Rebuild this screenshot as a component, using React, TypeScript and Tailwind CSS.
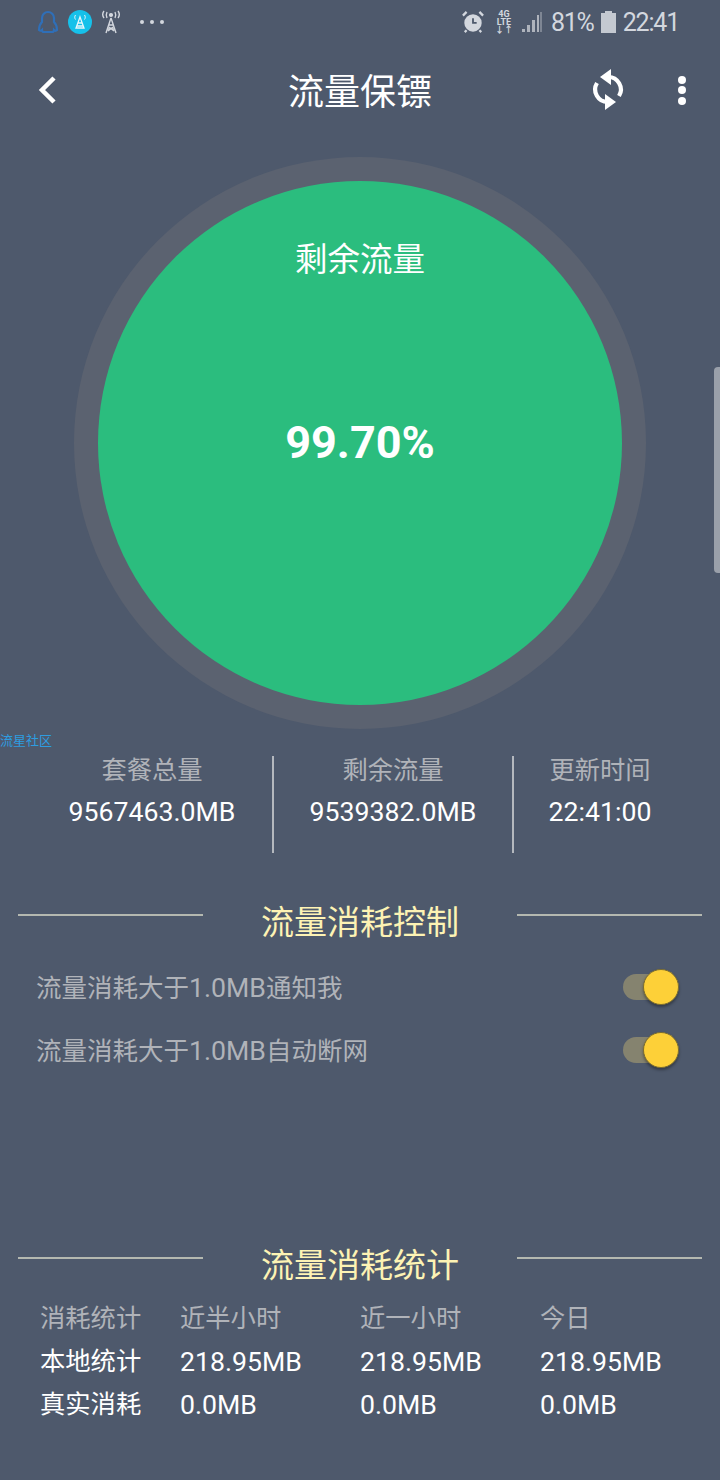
import React from 'react';

const cjk = 'font-["Roboto","Noto_Sans_CJK_SC",sans-serif]';

const SectionTitle = ({ title }: { title: string }) => (
  <div className="flex items-start px-[18px]">
    <div className="mt-[13px] h-[2px] w-[185px] bg-[#b4b8b0]" />
    <div className="flex-1 text-center text-[33px] leading-[44px] text-[#fdf3b4]">{title}</div>
    <div className="mt-[13px] h-[2px] w-[185px] bg-[#b4b8b0]" />
  </div>
);

const Toggle = () => (
  <div className="relative -mt-[2px] h-[26px] w-[56px] rounded-full bg-[#85836f]">
    <div className="absolute right-0 top-[-5px] h-[36px] w-[36px] rounded-full border border-[#7a6c30] bg-[#fdd038] shadow-[0_2px_3px_rgba(0,0,0,0.35)]" />
  </div>
);

const StatColumn = ({ label, value, width }: { label: string; value: string; width: string }) => (
  <div className={`flex flex-col items-center ${width}`}>
    <div className="text-[25.3px] leading-[30px] text-[#b0b3b9]">{label}</div>
    <div className="mt-[11px] text-[26.67px] leading-[30px] text-white">{value}</div>
  </div>
);

const rows = [
  { cells: ['消耗统计', '近半小时', '近一小时', '今日'], color: 'text-[#b0b3b9]', size: 'text-[25.3px]' },
  { cells: ['本地统计', '218.95MB', '218.95MB', '218.95MB'], color: 'text-white', size: 'text-[26.67px]' },
  { cells: ['真实消耗', '0.0MB', '0.0MB', '0.0MB'], color: 'text-white', size: 'text-[26.67px]' },
];

const StatusBar = () => (
  <div className="flex h-[44px] items-center justify-between pl-[37px] pr-[41px] text-[#d3d7de]">
    <div className="flex items-center">
      {/* QQ */}
      <svg width="22" height="24" viewBox="0 0 22 24" fill="none" stroke="#2f6fb8" strokeWidth="2.200">
        <path d="M5 12V8a6 6 0 0 1 12 0v4c2 2 3 5 3 8-1 1-2 1-3 0 0 1-1 2-2 2H7c-1 0-2-1-2-2-1 1-2 1-3 0 0-3 1-6 3-8z" />
      </svg>
      <svg className="ml-[9px]" width="24" height="24" viewBox="0 0 24 24">
        <circle cx="12" cy="12" r="12" fill="#16c1ea" />
        <path d="M12 7l-4 11h8zM10 13h4M9 16h6" fill="none" stroke="#e8f6fb" strokeWidth="1.300" />
        <path d="M7.500 5c-1 1.500-1 3 0 4.500M16.500 5c1 1.500 1 3 0 4.500" fill="none" stroke="#e8f6fb" strokeWidth="1" />
      </svg>
      <svg className="ml-[8px]" width="22" height="24" viewBox="0 0 22 24" fill="none" stroke="#d3d7de" strokeWidth="1.400">
        <path d="M11 8l-5 15M11 8l5 15M8.500 15h5M7 19h8M9 17l5 4M13 17l-5 4" />
        <circle cx="11" cy="5" r="1.400" fill="#d3d7de" />
        <path d="M7 2c-1 2-1 4 0 6M15 2c1 2 1 4 0 6M4 1c-1.500 2-1.500 5 0 7M18 1c1.500 2 1.500 5 0 7" />
      </svg>
      <div className="ml-[18px] flex gap-[6px]">
        <div className="h-[4px] w-[4px] rounded-full bg-[#d3d7de]" />
        <div className="h-[4px] w-[4px] rounded-full bg-[#d3d7de]" />
        <div className="h-[4px] w-[4px] rounded-full bg-[#d3d7de]" />
      </div>
    </div>
    <div className="flex items-center">
      <svg width="22" height="24" viewBox="0 0 24 26">
        <circle cx="12" cy="14" r="9.500" fill="#d3d7de" />
        <path d="M12 9v5h4" fill="none" stroke="#4e596c" strokeWidth="2" />
        <path d="M1 6l4-4M23 6l-4-4M5 22l-2 2M19 22l2 2" stroke="#d3d7de" strokeWidth="2.500" />
      </svg>
      <div className="ml-[13px] flex w-[14px] flex-col items-center text-[9px] font-bold leading-[8px]">
        <span>4G</span>
        <span>LTE</span>
        <span>↓↑</span>
      </div>
      <svg className="ml-[10px]" width="21" height="22" viewBox="0 0 21 22" fill="#aeb3bc">
        <rect x="1" y="18" width="3" height="3" />
        <rect x="6" y="14" width="3" height="7" />
        <rect x="11" y="9" width="3" height="12" />
        <rect x="16" y="4" width="2" height="17" />
        <rect x="19.500" y="1" width="1" height="20" />
      </svg>
      <span className="ml-[9px] text-[25px] leading-none tracking-[-1.200px]">81%</span>
      <svg className="ml-[7px]" width="15" height="22" viewBox="0 0 15 22" fill="#c4c9d1">
        <path d="M4 0h7v2h4v20H0V2h4z" />
      </svg>
      <span className="ml-[7px] text-[25px] leading-none tracking-[-1.200px]">22:41</span>
    </div>
  </div>
);

export default function App() {
  return (
    <div className={`relative h-[1480px] w-[720px] overflow-hidden bg-[#4e596c] ${cjk}`}>
      <StatusBar />

      {/* 标题栏 */}
      <div className="grid h-[92px] grid-cols-[1fr_auto_1fr] items-center pl-[36px] pr-[34px]">
        <svg width="26" height="32" viewBox="0 0 26 32" fill="none" stroke="white" strokeWidth="4.500">
          <path d="M18 4L6 16l12 12" />
        </svg>
        <div className="-ml-[2px] pt-[6px] text-[36px] leading-none text-white">流量保镖</div>
        <div className="flex items-center justify-end">
          <svg width="36" height="44" viewBox="0 0 36 44" fill="none" stroke="white" strokeWidth="4.200">
            <path d="M18 9A12.500 12.500 0 0 1 29 28" />
            <path d="M18 34A12.500 12.500 0 0 1 7 15" />
            <path d="M10 9l11-8v16zM26 34l-11-8v16z" fill="white" stroke="none" />
          </svg>
          <div className="ml-[52px] flex w-[8px] flex-col gap-[2.500px]">
            <div className="h-[8px] w-[8px] rounded-full bg-white" />
            <div className="h-[8px] w-[8px] rounded-full bg-white" />
            <div className="h-[8px] w-[8px] rounded-full bg-white" />
          </div>
        </div>
      </div>

      {/* 圆环 */}
      <div className="mt-[21px] flex justify-center">
        <div className="flex h-[572px] w-[572px] items-center justify-center rounded-full bg-[#5b6270]">
          <div className="flex h-[524px] w-[524px] flex-col items-center rounded-full bg-[#2bbd7e]">
            <div className="mt-[59px] text-[32.5px] leading-[40px] text-white">剩余流量</div>
            <div className="mt-[135px] text-[45px] font-bold leading-[56px] text-white">99.70%</div>
          </div>
        </div>
      </div>

      {/* 水印 */}
      <div className="absolute left-0 top-[733px] text-[13px] leading-[16px] text-[#2d9de0]">流星社区</div>

      <div className="mt-[27px] flex pl-[32px]">
        <StatColumn label="套餐总量" value="9567463.0MB" width="w-[240px]" />
        <div className="h-[97px] w-[2px] bg-[#b4b8be]" />
        <StatColumn label="剩余流量" value="9539382.0MB" width="w-[238px]" />
        <div className="h-[97px] w-[2px] bg-[#b4b8be]" />
        <StatColumn label="更新时间" value="22:41:00" width="w-[172px]" />
      </div>

      <div className="mt-[48px]">
        <SectionTitle title="流量消耗控制" />
      </div>

      <div className="mt-[11px] flex h-[63px] items-center justify-between pl-[36px] pr-[41px]">
        <div className="text-[25.5px] text-[#b0b3b9]">
          流量消耗大于<span className="text-[26.67px]">1.0MB</span>通知我
        </div>
        <Toggle />
      </div>
      <div className="flex h-[63px] items-center justify-between pl-[36px] pr-[41px]">
        <div className="text-[25.5px] text-[#b0b3b9]">
          流量消耗大于<span className="text-[26.67px]">1.0MB</span>自动断网
        </div>
        <Toggle />
      </div>

      <div className="mt-[162px]">
        <SectionTitle title="流量消耗统计" />
      </div>

      <div className="mt-[9px] pl-[40px]">
        {rows.map((row) => (
          <div key={row.cells[0]} className={`flex h-[43px] items-center ${row.size} ${row.color}`}>
            <div className="w-[140px] text-[25.3px]">{row.cells[0]}</div>
            <div className="w-[180px]">{row.cells[1]}</div>
            <div className="w-[180px]">{row.cells[2]}</div>
            <div className="w-[140px]">{row.cells[3]}</div>
          </div>
        ))}
      </div>

      {/* 滚动条 */}
      <div className="absolute right-0 top-[367px] h-[206px] w-[6px] rounded-l-[4px] bg-[#9aa0aa]" />
    </div>
  );
}
